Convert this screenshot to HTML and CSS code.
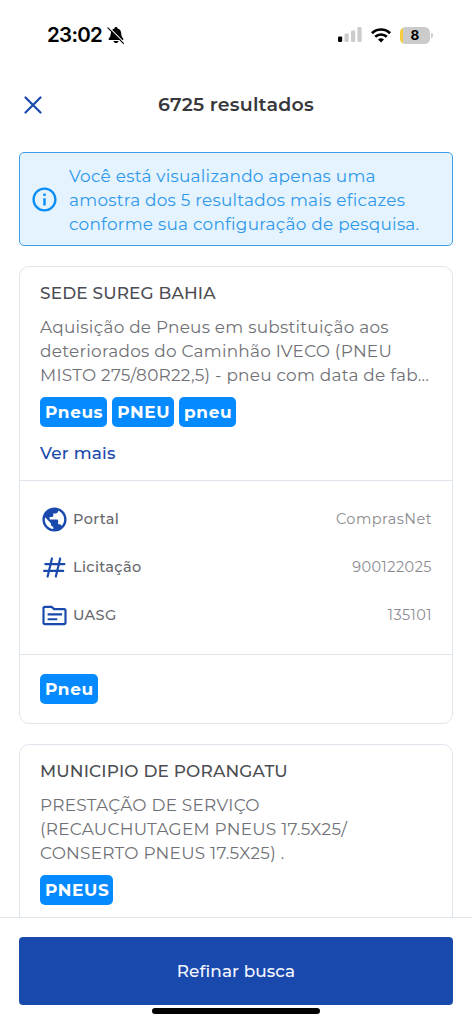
FILE: index.html
```html
<!DOCTYPE html>
<html lang="pt-BR">
<head>
<meta charset="utf-8">
<title>Resultados</title>
<link rel="stylesheet" href="styles.css">
</head>
<body>
<div class="screen">
  <div class="status">
    <div class="status-left">
      <span class="time">23:02</span>
      <svg class="bell" width="18" height="18" viewBox="0 0 18 18"><path d="M9 1.100c.9 0 1.500.6 1.600 1.300 2.400.7 3.500 2.500 3.600 4.900.1 2.700.8 3.800 2 5.200.5.700.2 1.500-.7 1.500H2.500c-.9 0-1.200-.8-.7-1.500 1.200-1.400 1.900-2.500 2-5.200.1-2.400 1.200-4.200 3.600-4.900C7.500 1.700 8.100 1.100 9 1.100z"/><path d="M6.500 14.900h5c-.2 1.300-1.200 2.100-2.500 2.100s-2.300-.8-2.500-2.100z"/><path d="M1.700 1.200l15.500 15.500" stroke="#fff" stroke-width="1.200"/><path d="M.9 1.900l15.500 15.500" stroke="#000" stroke-width="1.200" stroke-linecap="round"/></svg>
    </div>
    <div class="status-right">
      <svg class="signal" width="24" height="16" viewBox="0 0 24 16"><rect x="0" y="9.500" width="4.200" height="5.500" rx="1.200"/><g fill="#cbcbcb"><rect x="6.500" y="6.500" width="4.200" height="8.500" rx="1.200"/><rect x="13" y="3.500" width="4.200" height="11.500" rx="1.200"/><rect x="19.400" y="0" width="4.200" height="15" rx="1.200"/></g></svg>
      <svg class="wifi" width="20" height="15" viewBox="0 0 20 15"><g fill="none" stroke="#000" stroke-width="2.600"><path d="M.9 5.200a13 13 0 0 1 18.200 0"/><path d="M4.200 8.800a8.300 8.300 0 0 1 11.600 0"/></g><path d="M10 14.600l-3-3a4.300 4.300 0 0 1 6 0z"/></svg>
      <div class="battery"><span class="cell">8</span><span class="cap"></span></div>
    </div>
  </div>

  <header class="header">
    <svg class="close" width="18" height="18" viewBox="0 0 18 18"><path d="M1.500 1.500l15 15M16.500 1.500l-15 15" stroke="#1a49ad" stroke-width="2.200" stroke-linecap="round"/></svg>
    <h1 class="heading">6725 resultados</h1>
  </header>

  <main class="content">
    <div class="notice">
      <svg class="icon" width="29" height="29" viewBox="0 0 24 24" fill="#0a8df5"><path d="M11 7h2v2h-2zm0 4h2v6h-2zm1-9C6.480 2 2 6.480 2 12s4.480 10 10 10 10-4.480 10-10S17.520 2 12 2zm0 18c-4.410 0-8-3.590-8-8s3.590-8 8-8 8 3.590 8 8-3.590 8-8 8z"/></svg>
      <p class="notice-text">Você está visualizando apenas uma<br>amostra dos 5 resultados mais eficazes<br>conforme sua configuração de pesquisa.</p>
    </div>

    <article class="card">
      <div class="summary">
        <h2 class="title">SEDE SUREG BAHIA</h2>
        <p class="desc">Aquisição de Pneus em substituição aos<br>deteriorados do Caminhão IVECO (PNEU<br>MISTO 275/80R22,5) - pneu com data de fab...</p>
        <div class="chips"><span class="chip">Pneus</span><span class="chip">PNEU</span><span class="chip">pneu</span></div>
        <a class="more">Ver mais</a>
      </div>
      <div class="details">
        <div class="row">
          <svg class="icon" width="29" height="29" viewBox="0 0 24 24" fill="#1a49ad"><path d="M12 2C6.480 2 2 6.480 2 12s4.480 10 10 10 10-4.480 10-10S17.520 2 12 2zm-1 17.930c-3.950-.49-7-3.850-7-7.930 0-.62.080-1.210.21-1.790L9 15v1c0 1.100.9 2 2 2v1.930zm6.900-2.540c-.26-.81-1-1.390-1.900-1.390h-1v-3c0-.55-.45-1-1-1H8v-2h2c.55 0 1-.45 1-1V7h2c1.100 0 2-.9 2-2v-.41c2.930 1.190 5 4.060 5 7.410 0 2.080-.8 3.970-2.100 5.390z"/></svg>
          <span class="label">Portal</span><span class="value">ComprasNet</span>
        </div>
        <div class="row">
          <svg class="icon" width="29" height="29" viewBox="0 0 24 24" fill="none" stroke="#1a49ad" stroke-width="1.800" stroke-linecap="round"><path d="M9.900 4.500L6.300 19.500M16.700 4.500l-3.600 15M4.400 9.200h15.800M3.400 14.800h15.800"/></svg>
          <span class="label">Licitação</span><span class="value">900122025</span>
        </div>
        <div class="row">
          <svg class="icon" width="29" height="29" viewBox="0 0 24 24" fill="#1a49ad"><path fill-rule="evenodd" d="M20 5.800h-8L10 4H4c-1.100 0-2 .8-2 1.800v12.400c0 1 .9 1.800 2 1.800h16c1.100 0 2-.8 2-1.800V7.600c0-1-.9-1.800-2-1.800zm.2 12.400H3.800V5.800h5.500l2 1.800h8.900zM6.300 10.200h12v1.800H6.300zM6.300 14.200h8V16h-8z"/></svg>
          <span class="label">UASG</span><span class="value">135101</span>
        </div>
      </div>
      <div class="chips keywords"><span class="chip">Pneu</span></div>
    </article>

    <article class="card card-clipped">
      <div class="summary">
        <h2 class="title">MUNICIPIO DE PORANGATU</h2>
        <p class="desc">PRESTAÇÃO DE SERVIÇO<br>(RECAUCHUTAGEM PNEUS 17.5X25/<br>CONSERTO PNEUS 17.5X25) .</p>
        <div class="chips"><span class="chip">PNEUS</span></div>
      </div>
    </article>
  </main>

  <footer class="footer">
    <button class="refine">Refinar busca</button>
    <div class="home-indicator"></div>
  </footer>
</div>
</body>
</html>
```
FILE: styles.css
```css
* { box-sizing: border-box; }
body { margin: 0; background: #fff; font-family: Montserrat, Inter, "Open Sans", sans-serif; }
h1, h2, p { margin: 0; }
.screen { display: flex; flex-direction: column; width: 472px; height: 1024px; overflow: hidden; }

.status { display: flex; justify-content: space-between; align-items: center; flex: none; height: 70px; padding: 0 39px 0 47px; }
.status-left { display: flex; align-items: center; gap: 5px; }
.time { font: 600 20.500px/24px Inter, sans-serif; letter-spacing: -0.700px; }
.status-right { display: flex; align-items: center; }
.wifi { margin-left: 9px; }
.battery { display: flex; align-items: center; gap: 1px; margin-left: 9px; }
.cell { width: 30px; height: 17px; border-radius: 5.500px; background: linear-gradient(90deg, #f5cd3c 3px, #cbcbcb 3px); font: 700 13.500px/17px Inter, sans-serif; text-align: center; }
.cap { width: 2px; height: 5px; border-radius: 0 2px 2px 0; background: #cbcbcb; }

.header { display: grid; grid-template-columns: 18px 1fr 18px; align-items: center; flex: none; height: 70px; padding: 0 24px 0 24px; }
.heading { font-size: 19px; line-height: 24px; font-weight: 600; letter-spacing: 0.200px; color: #37383c; text-align: center; }

.content { display: flex; flex-direction: column; gap: 20px; flex: 1; min-height: 0; overflow: hidden; padding: 12px 19px 0; }
.content > * { flex: none; }
.icon { display: block; flex: none; }
.notice { display: flex; align-items: center; gap: 10px; height: 94px; padding: 1px 10px 0; border: 1.500px solid #3f9fe6; border-radius: 5px; background: #e4f3fe; }
.notice-text { font-size: 16.900px; line-height: 24px; letter-spacing: 0.250px; color: #2f98ea; white-space: nowrap; }

.card { border: 1px solid #dfe5ed; border-radius: 10px; }
.card-clipped { height: 260px; }
.summary { display: flex; flex-direction: column; padding: 14px 20px 15px; }
.title { font-size: 16.900px; line-height: 24px; font-weight: 500; letter-spacing: 0.170px; color: #4c4d52; }
.desc { margin-top: 10px; font-size: 16.900px; line-height: 24px; letter-spacing: 0.250px; color: #707176; white-space: nowrap; }
.chips { display: flex; gap: 5px; }
.summary .chips { margin-top: 10px; }
.chip { height: 30px; padding: 0 4px 0 5px; border-radius: 5px; background: #058bff; color: #fff; font-size: 16.900px; line-height: 30px; font-weight: 700; letter-spacing: 0.600px; }
.more { margin-top: 14px; font-size: 16.900px; line-height: 24px; font-weight: 500; letter-spacing: 0.200px; color: #1a49ad; }
.details { padding: 14px 20px 15px; border: solid #dfe5ed; border-width: 1px 0; }
.row { display: flex; align-items: center; height: 48px; }
.label { margin-left: 4px; font-size: 14.500px; font-weight: 500; letter-spacing: 0.350px; color: #66676c; }
.value { margin-left: auto; font-size: 14.500px; letter-spacing: 0.450px; color: #8a8b90; }
.keywords { padding: 19px 20px; }

.footer { display: flex; flex-direction: column; flex: none; height: 107px; padding: 19px 19px 0; border-top: 1px solid #dfe5ed; background: #fff; }
.refine { flex: none; height: 68px; border: 0; border-radius: 4px; background: #1a49ad; color: #f4f7ff; font: 500 16.900px/24px Montserrat, Inter, sans-serif; letter-spacing: 0.080px; }
.home-indicator { align-self: center; width: 168px; height: 6px; margin-top: 3px; border-radius: 3px; background: #000; }
```
